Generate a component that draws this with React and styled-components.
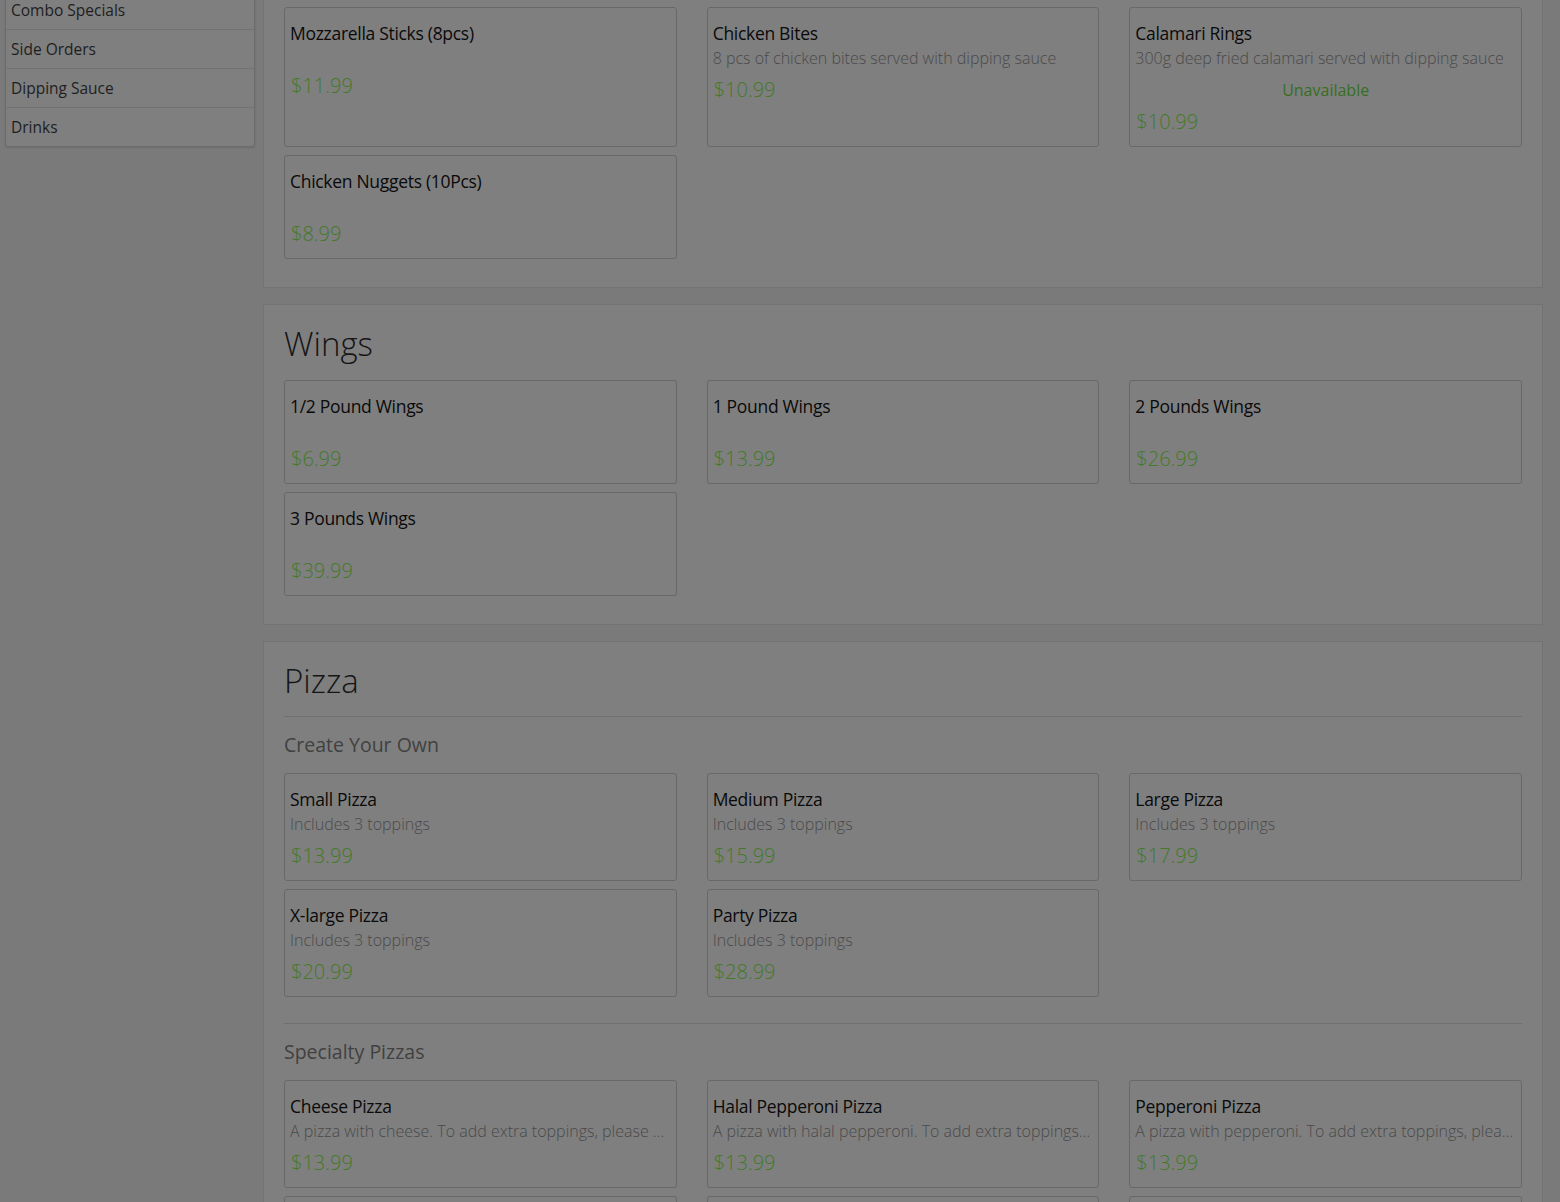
import React from "react";
import styled, { createGlobalStyle } from "styled-components";

const GlobalStyle = createGlobalStyle`
  html, body {
    margin: 0;
    padding: 0;
    background: #7a7a7a;
    font-family: "Open Sans", "Liberation Sans", sans-serif;
    color: #111;
    overflow: hidden;
  }
  * { box-sizing: border-box; }
`;

const Page = styled.div`
  display: grid;
  grid-template-columns: 250px 1280px;
  column-gap: 8px;
  align-items: start;
  padding-left: 5px;
  margin-top: -128px;
`;

const SideNav = styled.ul`
  list-style: none;
  margin: 0;
  padding: 0;
  background: #7f7f7f;
  border: 1px solid #6c6c6c;
  border-radius: 3px;
  box-shadow: 0 1px 2px rgba(0, 0, 0, 0.12);
`;

const SideItem = styled.li`
  height: 39px;
  padding: 0 5px;
  display: flex;
  align-items: center;
  font-size: 15.5px;
  color: #1e1e1e;
  border-top: ${(p) => (p.$first ? "none" : "1px solid #727272")};
`;

const Main = styled.div`
  display: flex;
  flex-direction: column;
  gap: 16px;
  padding-top: 59px;
`;

const Panel = styled.section`
  background: #7f7f7f;
  border: 1px solid #737373;
  padding: 20px 20px 20px;
`;

const Heading = styled.h2`
  margin: 0 0 18px;
  font-size: 33px;
  line-height: 37px;
  font-weight: 300;
  color: #151515;
`;

const Divider = styled.hr`
  border: 0;
  border-top: 1px solid #6f6f6f;
  margin: ${(p) => (p.$first ? "-1px" : "26px")} 0 0;
`;

const SubHeading = styled.h3`
  margin: 16px 0 17px;
  font-size: 19.5px;
  line-height: 23px;
  font-weight: 400;
  color: #414141;
`;

const Grid = styled.div`
  display: grid;
  grid-template-columns: repeat(3, 1fr);
  column-gap: 30px;
  row-gap: 8px;
  margin-bottom: 8px;
`;

const Card = styled.div`
  background: #7f7f7f;
  border: 1px solid #686868;
  border-radius: 3px;
  padding: 13px 5px 10px;
  display: flex;
  flex-direction: column;
  min-width: 0;
`;

const Title = styled.div`
  font-size: 17.5px;
  line-height: 25px;
  color: #0a0a0a;
  letter-spacing: -0.3px;
  white-space: nowrap;
`;

const Desc = styled.div`
  font-size: 16px;
  line-height: ${(p) => (p.$empty ? "20px" : "24px")};
  min-height: 20px;
  font-weight: 300;
  color: #4a4a4a;
  white-space: nowrap;
  overflow: hidden;
  text-overflow: ellipsis;
`;

const Status = styled.div`
  margin-top: 8px;
  font-size: 16px;
  line-height: 24px;
  text-align: center;
  color: #386e1d;
`;

const Price = styled.div`
  margin-top: 6px;
  font-size: 20px;
  line-height: 28px;
  font-weight: 300;
  color: #437a28;
  padding-left: 1px;
`;

const sideItems = [
  "Appetizers",
  "Wings",
  "Pizza",
  "Combo Specials",
  "Side Orders",
  "Dipping Sauce",
  "Drinks",
];

const pizzaNote = "To add extra toppings, please select a Create Your Own pizza.";

const sections = [
  {
    title: "Appetizers",
    groups: [
      {
        items: [
          { name: "Mozzarella Sticks (8pcs)", price: "$11.99" },
          {
            name: "Chicken Bites",
            desc: "8 pcs of chicken bites served with dipping sauce",
            price: "$10.99",
          },
          {
            name: "Calamari Rings",
            desc: "300g deep fried calamari served with dipping sauce",
            status: "Unavailable",
            price: "$10.99",
          },
          { name: "Chicken Nuggets (10Pcs)", price: "$8.99" },
        ],
      },
    ],
  },
  {
    title: "Wings",
    groups: [
      {
        items: [
          { name: "1/2 Pound Wings", price: "$6.99" },
          { name: "1 Pound Wings", price: "$13.99" },
          { name: "2 Pounds Wings", price: "$26.99" },
          { name: "3 Pounds Wings", price: "$39.99" },
        ],
      },
    ],
  },
  {
    title: "Pizza",
    groups: [
      {
        name: "Create Your Own",
        items: [
          { name: "Small Pizza", desc: "Includes 3 toppings", price: "$13.99" },
          { name: "Medium Pizza", desc: "Includes 3 toppings", price: "$15.99" },
          { name: "Large Pizza", desc: "Includes 3 toppings", price: "$17.99" },
          { name: "X-large Pizza", desc: "Includes 3 toppings", price: "$20.99" },
          { name: "Party Pizza", desc: "Includes 3 toppings", price: "$28.99" },
        ],
      },
      {
        name: "Specialty Pizzas",
        items: [
          { name: "Cheese Pizza", desc: "A pizza with cheese. " + pizzaNote, price: "$13.99" },
          {
            name: "Halal Pepperoni Pizza",
            desc: "A pizza with halal pepperoni. " + pizzaNote,
            price: "$13.99",
          },
          { name: "Pepperoni Pizza", desc: "A pizza with pepperoni. " + pizzaNote, price: "$13.99" },
          { name: "Hawaiian Pizza", desc: "A pizza with ham and pineapple. " + pizzaNote, price: "$15.99" },
          { name: "Meat Lovers Pizza", desc: "A pizza with pepperoni, bacon and sausage. " + pizzaNote, price: "$16.99" },
          { name: "Veggie Pizza", desc: "A pizza with green peppers, mushrooms and onions. " + pizzaNote, price: "$15.99" },
        ],
      },
    ],
  },
];

function MenuCard({ item }) {
  return (
    <Card>
      <Title>{item.name}</Title>
      <Desc $empty={!item.desc}>{item.desc}</Desc>
      {item.status && <Status>{item.status}</Status>}
      <Price>{item.price}</Price>
    </Card>
  );
}

export default function App() {
  return (
    <>
      <GlobalStyle />
      <Page>
        <div>
          <SideNav>
            {sideItems.map((s, i) => (
              <SideItem key={s} $first={i === 0}>
                {s}
              </SideItem>
            ))}
          </SideNav>
        </div>
        <Main>
          {sections.map((sec) => (
            <Panel key={sec.title}>
              <Heading>{sec.title}</Heading>
              {sec.groups.map((g, gi) => (
                <React.Fragment key={gi}>
                  {g.name && <Divider $first={gi === 0} />}
                  {g.name && <SubHeading>{g.name}</SubHeading>}
                  <Grid>
                    {g.items.map((it) => (
                      <MenuCard key={it.name} item={it} />
                    ))}
                  </Grid>
                </React.Fragment>
              ))}
            </Panel>
          ))}
        </Main>
      </Page>
    </>
  );
}
